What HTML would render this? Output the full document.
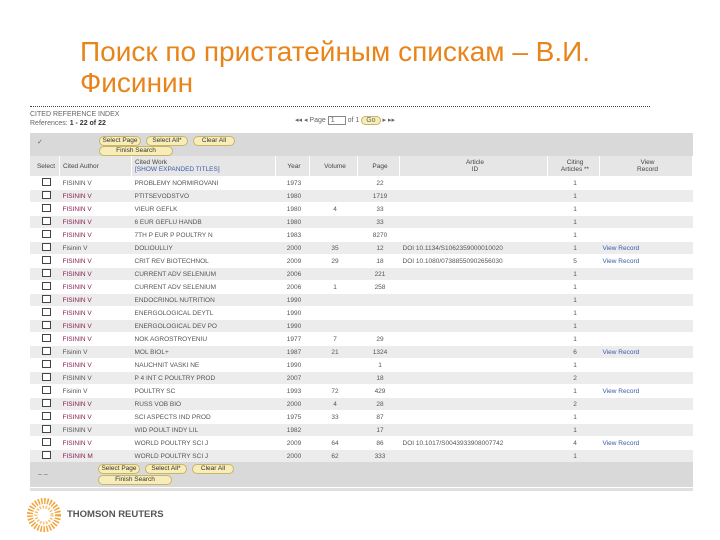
<!DOCTYPE html><html><head><meta charset="utf-8"><style>
body{margin:0;width:720px;height:540px;background:#fff;position:relative;font-family:"Liberation Sans",sans-serif;overflow:hidden}
h1{position:absolute;left:80px;top:36px;margin:0;font-weight:normal;font-size:28px;line-height:31px;color:#e8841a;font-family:"Liberation Sans","DejaVu Sans",sans-serif;white-space:nowrap}
.dots{position:absolute;left:30px;top:106px;width:620px;border-top:1px dotted #444}
.s{position:absolute;font-size:7px;color:#666}
.bar{position:absolute;left:30px;width:663px;background:#d9d9d9}
.btn{position:absolute;height:8px;border:1px solid #c9b46a;background:#f7edb8;border-radius:5px;font-size:6.5px;line-height:8px;text-align:center;color:#333}
table{position:absolute;left:30px;top:156px;width:663px;border-collapse:collapse;font-size:6.5px;color:#555}
td{height:12px;padding:0 0 0 3px;white-space:nowrap;border-bottom:1px solid #fff}
thead td{height:20px;background:#e6e6e6;color:#444;border-right:1px solid #fff}
tbody tr:nth-child(even) td{background:#ececec}
.c{text-align:center}
.cb{display:inline-block;width:7px;height:6px;border:1px solid #444;background:#fff}
a{color:#3b5ba8;text-decoration:none}
.au{color:#8a2050}
</style></head><body>
<h1>Поиск по пристатейным спискам – В.И.<br>Фисинин</h1>
<div class="dots"></div>
<div class="s" style="left:30px;top:111px">CITED REFERENCE INDEX</div>
<div class="s" style="left:30px;top:120px">References: <b style="color:#333">1 - 22 of 22</b></div>
<div class="s" style="left:295px;top:116px">◂◂ ◂ Page <span style="border:1px solid #888;padding:0 10px 0 2px;background:#fff">1</span> of 1 <span style="border:1px solid #c9b46a;background:#f7edb8;border-radius:5px;padding:0 4px">Go</span> ▸ ▸▸</div>
<div class="bar" style="top:133px;height:23px"></div>
<div class="s" style="left:37px;top:138px">✓</div>
<div class="btn" style="left:99px;top:136px;width:40px">Select Page</div>
<div class="btn" style="left:146px;top:136px;width:40px">Select All*</div>
<div class="btn" style="left:193px;top:136px;width:40px">Clear All</div>
<div class="btn" style="left:99px;top:146px;width:72px">Finish Search</div>
<table>
<thead><tr><td class="c" style="width:26px">Select</td><td style="width:68px">Cited Author</td><td style="width:140px">Cited Work<br><span style="color:#3b5ba8">[SHOW EXPANDED TITLES]</span></td><td class="c" style="width:30px">Year</td><td class="c" style="width:44px">Volume</td><td class="c" style="width:38px">Page</td><td class="c" style="width:144px">Article<br>ID</td><td class="c" style="width:48px">Citing<br>Articles **</td><td class="c">View<br>Record</td></tr></thead>
<tbody>
<tr><td class="c"><span class="cb"></span></td><td>FISININ V</td><td>PROBLEMY NORMIROVANI</td><td class="c">1973</td><td class="c"></td><td class="c">22</td><td></td><td class="c">1</td><td></td></tr>
<tr><td class="c"><span class="cb"></span></td><td class="au">FISININ V</td><td>PTITSEVODSTVO</td><td class="c">1980</td><td class="c"></td><td class="c">1719</td><td></td><td class="c">1</td><td></td></tr>
<tr><td class="c"><span class="cb"></span></td><td class="au">FISININ V</td><td>VIEUR GEFLK</td><td class="c">1980</td><td class="c">4</td><td class="c">33</td><td></td><td class="c">1</td><td></td></tr>
<tr><td class="c"><span class="cb"></span></td><td class="au">FISININ V</td><td>6 EUR GEFLU HANDB</td><td class="c">1980</td><td class="c"></td><td class="c">33</td><td></td><td class="c">1</td><td></td></tr>
<tr><td class="c"><span class="cb"></span></td><td class="au">FISININ V</td><td>7TH P EUR P POULTRY N</td><td class="c">1983</td><td class="c"></td><td class="c">8270</td><td></td><td class="c">1</td><td></td></tr>
<tr><td class="c"><span class="cb"></span></td><td>Fisinin V</td><td>DOLIOULLIY</td><td class="c">2000</td><td class="c">35</td><td class="c">12</td><td>DOI 10.1134/S1062359000010020</td><td class="c">1</td><td><a>View Record</a></td></tr>
<tr><td class="c"><span class="cb"></span></td><td class="au">FISININ V</td><td>CRIT REV BIOTECHNOL</td><td class="c">2009</td><td class="c">29</td><td class="c">18</td><td>DOI 10.1080/07388550902656030</td><td class="c">5</td><td><a>View Record</a></td></tr>
<tr><td class="c"><span class="cb"></span></td><td class="au">FISININ V</td><td>CURRENT ADV SELENIUM</td><td class="c">2006</td><td class="c"></td><td class="c">221</td><td></td><td class="c">1</td><td></td></tr>
<tr><td class="c"><span class="cb"></span></td><td class="au">FISININ V</td><td>CURRENT ADV SELENIUM</td><td class="c">2006</td><td class="c">1</td><td class="c">258</td><td></td><td class="c">1</td><td></td></tr>
<tr><td class="c"><span class="cb"></span></td><td class="au">FISININ V</td><td>ENDOCRINOL NUTRITION</td><td class="c">1990</td><td class="c"></td><td class="c"></td><td></td><td class="c">1</td><td></td></tr>
<tr><td class="c"><span class="cb"></span></td><td class="au">FISININ V</td><td>ENERGOLOGICAL DEYTL</td><td class="c">1990</td><td class="c"></td><td class="c"></td><td></td><td class="c">1</td><td></td></tr>
<tr><td class="c"><span class="cb"></span></td><td class="au">FISININ V</td><td>ENERGOLOGICAL DEV PO</td><td class="c">1990</td><td class="c"></td><td class="c"></td><td></td><td class="c">1</td><td></td></tr>
<tr><td class="c"><span class="cb"></span></td><td class="au">FISININ V</td><td>NOK AGROSTROYENIU</td><td class="c">1977</td><td class="c">7</td><td class="c">29</td><td></td><td class="c">1</td><td></td></tr>
<tr><td class="c"><span class="cb"></span></td><td>Fisinin V</td><td>MOL BIOL+</td><td class="c">1987</td><td class="c">21</td><td class="c">1324</td><td></td><td class="c">6</td><td><a>View Record</a></td></tr>
<tr><td class="c"><span class="cb"></span></td><td class="au">FISININ V</td><td>NAUCHNIT VASKI NE</td><td class="c">1990</td><td class="c"></td><td class="c">1</td><td></td><td class="c">1</td><td></td></tr>
<tr><td class="c"><span class="cb"></span></td><td>FISININ V</td><td>P 4 INT C POULTRY PROD</td><td class="c">2007</td><td class="c"></td><td class="c">18</td><td></td><td class="c">2</td><td></td></tr>
<tr><td class="c"><span class="cb"></span></td><td>Fisinin V</td><td>POULTRY SC</td><td class="c">1993</td><td class="c">72</td><td class="c">429</td><td></td><td class="c">1</td><td><a>View Record</a></td></tr>
<tr><td class="c"><span class="cb"></span></td><td class="au">FISININ V</td><td>RUSS VOB BIO</td><td class="c">2000</td><td class="c">4</td><td class="c">28</td><td></td><td class="c">2</td><td></td></tr>
<tr><td class="c"><span class="cb"></span></td><td class="au">FISININ V</td><td>SCI ASPECTS IND PROD</td><td class="c">1975</td><td class="c">33</td><td class="c">87</td><td></td><td class="c">1</td><td></td></tr>
<tr><td class="c"><span class="cb"></span></td><td>FISININ V</td><td>WID POULT INDY LIL</td><td class="c">1982</td><td class="c"></td><td class="c">17</td><td></td><td class="c">1</td><td></td></tr>
<tr><td class="c"><span class="cb"></span></td><td class="au">FISININ V</td><td>WORLD POULTRY SCI J</td><td class="c">2009</td><td class="c">64</td><td class="c">86</td><td>DOI 10.1017/S0043933908007742</td><td class="c">4</td><td><a>View Record</a></td></tr>
<tr><td class="c"><span class="cb"></span></td><td class="au">FISININ M</td><td>WORLD POULTRY SCI J</td><td class="c">2000</td><td class="c">62</td><td class="c">333</td><td></td><td class="c">1</td><td></td></tr>
</tbody></table>
<div class="bar" style="top:462px;height:25px"></div>
<div class="bar" style="top:488px;height:3px;background:#e0e0e0"></div>
<div class="s" style="left:38px;top:471px">– –</div>
<div class="btn" style="left:98px;top:464px;width:40px">Select Page</div>
<div class="btn" style="left:145px;top:464px;width:40px">Select All*</div>
<div class="btn" style="left:192px;top:464px;width:40px">Clear All</div>
<div class="btn" style="left:98px;top:475px;width:72px">Finish Search</div>
<svg style="position:absolute;left:26px;top:497px" width="36" height="36" viewBox="0 0 36 36">
<circle cx="18" cy="18" r="14" fill="none" stroke="#f2a33a" stroke-width="6" stroke-dasharray="1.5 1.5"/>
<circle cx="18" cy="18" r="8" fill="none" stroke="#f7c070" stroke-width="3" stroke-dasharray="1.5 1.5"/>
</svg>
<div style="position:absolute;left:67px;top:509px;font-size:9.5px;font-weight:bold;color:#555">THOMSON REUTERS</div>
</body></html>
